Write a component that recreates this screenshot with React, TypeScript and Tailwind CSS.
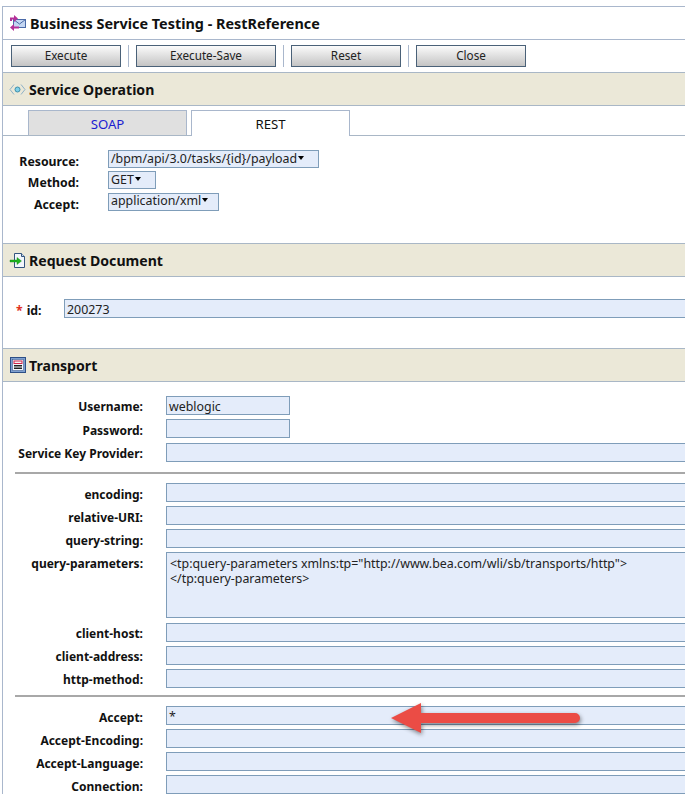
const font = "font-['Noto_Sans','Liberation_Sans',sans-serif]";

function Field({ label, value, short, low }: { label: string; value?: string; short?: boolean; low?: boolean }) {
  return (
    <div className="flex items-center h-[19px]">
      <span className={`w-[128px] text-right font-bold text-[12px] leading-none text-[#111] whitespace-nowrap ${low ? "pt-[5px]" : "pt-[3px]"}`}>{label}</span>
      <div
        className={`ml-[23px] h-[19px] border border-[#7f9db9] bg-[#e4ecfa] pl-[2px] text-[12.4px] leading-[20px] text-[#222] ${
          short ? "w-[124px]" : "flex-1 -mr-[4px]"
        }`}
      >
        {value}
      </div>
    </div>
  );
}

function Select({ value, width }: { value: string; width: string }) {
  return (
    <div className={`flex items-center h-[18px] border border-[#7f9db9] bg-[#e4ecfa] pl-[2px] text-[12.4px] leading-none text-[#222] whitespace-nowrap ${width}`}>
      <span>{value}</span>
      <span className="ml-[1px] mb-[3px] w-0 h-0 border-x-[3.5px] border-x-transparent border-t-[4px] border-t-black" />
    </div>
  );
}

function Btn({ label, width }: { label: string; width: string }) {
  return (
    <button className={`h-[22px] border border-[#4a6178] bg-gradient-to-b from-[#fbfbfb] to-[#c4c4c4] text-[11.7px] leading-none text-[#222] ${width}`}>
      {label}
    </button>
  );
}

function Section({ icon, title }: { icon: React.ReactNode; title: string }) {
  return (
    <div className="flex items-center h-[34px] bg-[#ebe8d8] border-y border-[#a9b7c6] pl-[6px] gap-[3px]">
      <span className="w-[17px] h-[17px] flex items-center justify-center">{icon}</span>
      <span className="pt-[2px] font-bold text-[14.1px] leading-none text-[#111]">{title}</span>
    </div>
  );
}

function ResLabel({ children }: { children: string }) {
  return <span className="w-[76px] text-right font-bold text-[12.3px] leading-none text-[#111] pt-[6px]">{children}</span>;
}

function TitleIcon() {
  return (
    <svg width="18" height="18" viewBox="0 0 18 18">
      <rect x="4.500" y="5.500" width="12" height="8" fill="#c4d6f2" stroke="#4a6aa8" />
      <path d="M4.500 5.500l6 4.500 6-4.500" fill="none" stroke="#4a6aa8" />
      <path d="M1 3.500h4V1l4 3.500L5 8V5.500H3V7H1z" fill="#b5309a" />
      <path d="M10 12.500H5V10l-4 3.500L5 17v-2.500h5z" fill="#b5309a" />
    </svg>
  );
}

function OpIcon() {
  return (
    <svg width="17" height="13" viewBox="0 0 17 13">
      <path d="M5 1.500L1 6.500l4 5M12 1.500l4 5-4 5" fill="none" stroke="#8fb2c8" />
      <circle cx="8.500" cy="6.500" r="2.500" fill="#7fd0e8" stroke="#3f8fab" />
    </svg>
  );
}

function DocIcon() {
  return (
    <svg width="17" height="17" viewBox="0 0 17 17">
      <path d="M5.500 1.500h7l3 3v11h-10z" fill="#f2f6fc" stroke="#34557f" />
      <path d="M12.500 1.500v3h3" fill="#c9d8ec" stroke="#34557f" />
      <path d="M1 8h7V5.500L12.500 9 8 12.500V10H1z" fill="#1fb51f" stroke="#128012" strokeWidth="0.4" />
    </svg>
  );
}

function ListIcon() {
  return (
    <svg width="16" height="16" viewBox="0 0 16 16">
      <rect x="0.500" y="0.500" width="15" height="15" fill="#7d9fd0" stroke="#2d4f86" />
      <rect x="2.500" y="2.500" width="11" height="11" fill="#f3f6fb" stroke="#2d4f86" strokeWidth="0.5" />
      <rect x="4" y="4" width="8" height="2.500" fill="#f4f4f4" stroke="#d2244a" />
      <path d="M4 8.500h8M4 10h8M4 11.500h8" stroke="#222" />
    </svg>
  );
}

export default function App() {
  return (
    <div className={`relative w-[685px] h-[794px] overflow-hidden bg-white pt-[6px] pl-[2px] ${font}`}>
      <div className="h-full border-l border-t border-[#a9b7cc]">
        <div className="flex items-center h-[33px] border-b border-[#a9b7cc] pl-[6px] gap-[3px]">
          <TitleIcon />
          <span className="pt-[2px] font-bold text-[14.4px] leading-none text-[#111]">Business Service Testing - RestReference</span>
        </div>

        <div className="flex items-center h-[32px] pl-[8px]">
          <Btn label="Execute" width="w-[110px]" />
          <span className="mx-[7px] w-px h-[22px] bg-[#a9b7cc]" />
          <Btn label="Execute-Save" width="w-[140px]" />
          <span className="mx-[7px] w-px h-[22px] bg-[#a9b7cc]" />
          <Btn label="Reset" width="w-[110px]" />
          <span className="mx-[7px] w-px h-[22px] bg-[#a9b7cc]" />
          <Btn label="Close" width="w-[110px]" />
        </div>

        <Section icon={<OpIcon />} title="Service Operation" />

        <div className="flex items-end h-[30px] pl-[25px] gap-[4px] border-b border-[#a9b7c6]">
          <div className="flex items-center justify-center w-[159px] h-[25px] pt-[3px] bg-[#e0e0e0] border border-b-0 border-[#a9b7cc] text-[13.2px] leading-none text-[#1c1cd0]">SOAP</div>
          <div className="flex items-center justify-center w-[159px] h-[26px] pt-[2px] -mb-px bg-white border border-b-0 border-[#a9b7cc] text-[13.2px] leading-none text-[#111]">REST</div>
        </div>

        <div className="flex flex-col h-[107px] pt-[14px] gap-[3px]">
          <div className="flex gap-[29px]">
            <ResLabel>Resource:</ResLabel>
            <Select value="/bpm/api/3.0/tasks/{id}/payload" width="w-[211px]" />
          </div>
          <div className="flex gap-[29px]">
            <ResLabel>Method:</ResLabel>
            <Select value="GET" width="w-[48px]" />
          </div>
          <div className="flex gap-[29px]">
            <ResLabel>Accept:</ResLabel>
            <Select value="application/xml" width="w-[111px]" />
          </div>
        </div>

        <Section icon={<DocIcon />} title="Request Document" />

        <div className="flex items-start h-[71px] pt-[22px]">
          <div className="w-[61px] pl-[13px] flex gap-[4px] text-[12.3px] font-bold leading-[23px]">
            <span className="text-[#e0301e]">*</span>
            <span className="text-[#111]">id:</span>
          </div>
          <div className="flex-1 -mr-[4px] h-[19px] border border-[#7f9db9] bg-[#e4ecfa] pl-[2px] text-[12.4px] leading-[20px] text-[#222]">200273</div>
        </div>

        <Section icon={<ListIcon />} title="Transport" />

        <div className="flex flex-col pt-[14px] pl-[12px]">
          <div className="flex flex-col gap-[4px]">
            <Field label="Username:" value="weblogic" short />
            <Field label="Password:" short low />
            <div className="pt-px">
              <Field label="Service Key Provider:" />
            </div>
          </div>
          <hr className="mt-[10px] mb-[9px] border-t-2 border-[#a8a8a8] border-b-0" />
          <div className="flex flex-col gap-[4px]">
            <Field label="encoding:" low />
            <Field label="relative-URI:" low />
            <Field label="query-string:" low />
            <div className="flex items-start h-[66px]">
              <span className="w-[128px] text-right font-bold text-[12px] leading-none text-[#111] pt-[6px]">query-parameters:</span>
              <div className="ml-[23px] flex-1 -mr-[4px] h-[66px] border border-[#7f9db9] bg-[#e4ecfa] pl-[3px] pt-[3px] text-[12.4px] leading-[15px] text-[#222] whitespace-nowrap overflow-hidden">
                &lt;tp:query-parameters xmlns:tp="http://www.bea.com/wli/sb/transports/http"&gt;
                <br />
                &lt;/tp:query-parameters&gt;
              </div>
            </div>
            <div className="pt-px">
              <Field label="client-host:" />
            </div>
            <Field label="client-address:" />
            <Field label="http-method:" />
          </div>
          <hr className="mt-[7px] mb-[9px] border-t-2 border-[#a8a8a8] border-b-0" />
          <div className="flex flex-col gap-[4px]">
            <Field label="Accept:" value="*" low />
            <Field label="Accept-Encoding:" low />
            <Field label="Accept-Language:" low />
            <Field label="Connection:" low />
          </div>
        </div>
      </div>

      <svg className="absolute left-[388px] top-[700px] drop-shadow-[1px_2px_2px_rgba(0,0,0,0.45)]" width="200" height="40" viewBox="0 0 200 40">
        <path d="M3 18L33 3v10H187a5 5 0 0 1 0 10H33v10z" fill="#eb4c45" />
      </svg>
    </div>
  );
}
